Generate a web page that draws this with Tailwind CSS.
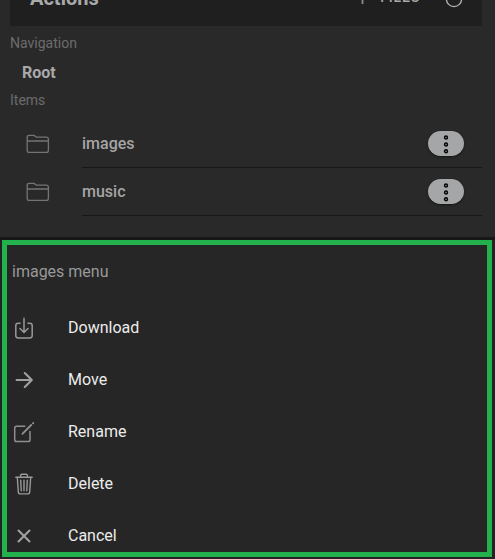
<!DOCTYPE html>
<html lang="en">
<head>
<meta charset="utf-8">
<title>Files</title>
<script src="https://cdn.jsdelivr.net/npm/@tailwindcss/browser@4"></script>
</head>
<body class="w-[495px] h-[559px] overflow-hidden bg-[#1c1c1c] font-[Roboto,sans-serif] text-[16px] flex flex-col">
  <main class="h-[237px] shrink-0 bg-[#292929] pl-[10px] pr-[13px] flex flex-col overflow-hidden">
    <header class="h-[26px] shrink-0 bg-[#1f1f1f] flex items-start justify-between pl-5 pr-[19px] text-[#a9a9a9] overflow-hidden">
      <h1 class="text-[20px] font-bold leading-[24px] -mt-[14px]">Actions</h1>
      <div class="flex items-start">
        <svg class="w-[10px] h-[16px] -mt-[12px] mr-[12px]" viewBox="0 0 10 16" fill="none" stroke="#8c8c8c" stroke-width="1.8"><path d="M4.5 16V1M.5 5l4-4 4 4"/></svg>
        <span class="text-[14px] font-medium leading-[16px] tracking-[0.84px] -mt-[11px] mr-[25px]">FILES</span>
        <svg class="w-[18px] h-[18px] -mt-[10px]" viewBox="0 0 18 18" fill="none" stroke="#b0b0b0" stroke-width="1.4"><circle cx="9" cy="9" r="7.6"/></svg>
      </div>
    </header>
    <h2 class="h-[34px] leading-[34px] text-[14px] text-[#6c6c6c]">Navigation</h2>
    <div class="h-[24px] leading-[26px] pl-3 font-bold text-[#a9a9a9]">Root</div>
    <h2 class="h-[36px] leading-[32px] text-[14px] text-[#6c6c6c]">Items</h2>
    <ul class="shrink-0 text-[#a5a5a5] font-medium">
      <li class="h-12 flex">
        <div class="w-[72px] pl-4 pt-[14px]">
          <svg class="w-6 h-5" viewBox="0 0 24 20" fill="none" stroke="#747474" stroke-width="1.3"><path d="M1.2 16.2V3.4Q1.2 1.3 3.3 1.3H7.4Q8.4 1.3 9.2 2.2T11 3.1H20.2Q22.4 3.1 22.4 5.2V16.2Q22.4 18.4 20.2 18.4H3.4Q1.2 18.4 1.2 16.2ZM1.2 7H22.4"/></svg>
        </div>
        <div class="flex-1 flex items-center justify-between border-b border-[#181818] pr-[18px]">
          <span>images</span>
          <button class="w-9 h-[25px] rounded-full bg-[#a5a6a8] shadow-[0_1px_2px_#151515] flex items-center justify-center"><svg class="w-[6px] h-5" viewBox="0 0 6 20" fill="#888" stroke="#050505" stroke-width="1.4"><circle cx="3" cy="3.5" r="1.5"/><circle cx="3" cy="10.5" r="1.5"/><circle cx="3" cy="17.3" r="1.5"/></svg></button>
        </div>
      </li>
      <li class="h-12 flex">
        <div class="w-[72px] pl-4 pt-[14px]">
          <svg class="w-6 h-5" viewBox="0 0 24 20" fill="none" stroke="#747474" stroke-width="1.3"><path d="M1.2 16.2V3.4Q1.2 1.3 3.3 1.3H7.4Q8.4 1.3 9.2 2.2T11 3.1H20.2Q22.4 3.1 22.4 5.2V16.2Q22.4 18.4 20.2 18.4H3.4Q1.2 18.4 1.2 16.2ZM1.2 7H22.4"/></svg>
        </div>
        <div class="flex-1 flex items-center justify-between border-b border-[#181818] pr-[18px]">
          <span>music</span>
          <button class="w-9 h-[25px] rounded-full bg-[#a5a6a8] shadow-[0_1px_2px_#151515] flex items-center justify-center"><svg class="w-[6px] h-5" viewBox="0 0 6 20" fill="#888" stroke="#050505" stroke-width="1.4"><circle cx="3" cy="3.5" r="1.5"/><circle cx="3" cy="10.5" r="1.5"/><circle cx="3" cy="17.3" r="1.5"/></svg></button>
        </div>
      </li>
    </ul>
  </main>
  <div class="flex-1 border-t-[3px] border-[#171717] bg-[#222] pl-[2px] pr-[3px]">
    <section class="h-[317px] border-[5px] border-[#22b14c] bg-[#262626] pl-[5px] overflow-hidden">
      <h2 class="h-[57px] pt-[15px] leading-[24px] text-[#999]">images menu</h2>
      <ul class="text-[#ececec]">
        <li class="h-[52px] flex items-center"><svg class="w-6 h-6 mr-8" viewBox="0 0 24 24" fill="none" stroke="#999" stroke-width="1.5" stroke-linecap="round" stroke-linejoin="round"><path d="M8 7.2H6.2Q3.8 7.2 3.8 9.6V19.6Q3.8 22 6.2 22H17.8Q20.2 22 20.2 19.6V9.6Q20.2 7.2 17.8 7.2H16M12 2.3V16.3M8 12.5l4 4 4-4"/></svg><span>Download</span></li>
        <li class="h-[52px] flex items-center"><svg class="w-6 h-6 mr-8" viewBox="0 0 24 24" fill="none" stroke="#a0a0a0" stroke-width="2.1" stroke-linecap="round" stroke-linejoin="round"><path d="M4.6 12H19.5M12.8 5l7 7-7 7"/></svg><span>Move</span></li>
        <li class="h-[52px] flex items-center"><svg class="w-6 h-6 mr-8" viewBox="0 0 24 24" fill="none" stroke="#8f8f8f" stroke-width="1.5" stroke-linecap="round" stroke-linejoin="round"><path d="M12.8 6.2H4.5Q2.7 6.2 2.7 8V19.7Q2.7 21.5 4.5 21.5H16.2Q18 21.5 18 19.7V11.5"/><path d="M10.4 13.8L19.2 5M20.9 3.4l.4-.4" stroke-width="1.8"/></svg><span>Rename</span></li>
        <li class="h-[52px] flex items-center"><svg class="w-6 h-6 mr-8" viewBox="0 0 24 24" fill="none" stroke="#999" stroke-width="1.4" stroke-linecap="round" stroke-linejoin="round"><path d="M3.8 5.3H20.2M5.3 5.3l1 14.4Q6.4 21.9 8.2 21.9H15.8Q17.6 21.9 17.7 19.7L18.7 5.3M8.6 5V3.5Q8.6 2.3 9.8 2.3H14.2Q15.4 2.3 15.4 3.5V5M12 8.3V18.8M8.7 8.3l.5 10.5M15.3 8.3l-.5 10.5"/></svg><span>Delete</span></li>
        <li class="h-[52px] flex items-center"><svg class="w-6 h-6 mr-8" viewBox="0 0 24 24" fill="none" stroke="#a0a0a0" stroke-width="2.1" stroke-linecap="round"><path d="M6.5 6.5l11 11M17.5 6.5l-11 11"/></svg><span>Cancel</span></li>
      </ul>
    </section>
  </div>
</body>
</html>
